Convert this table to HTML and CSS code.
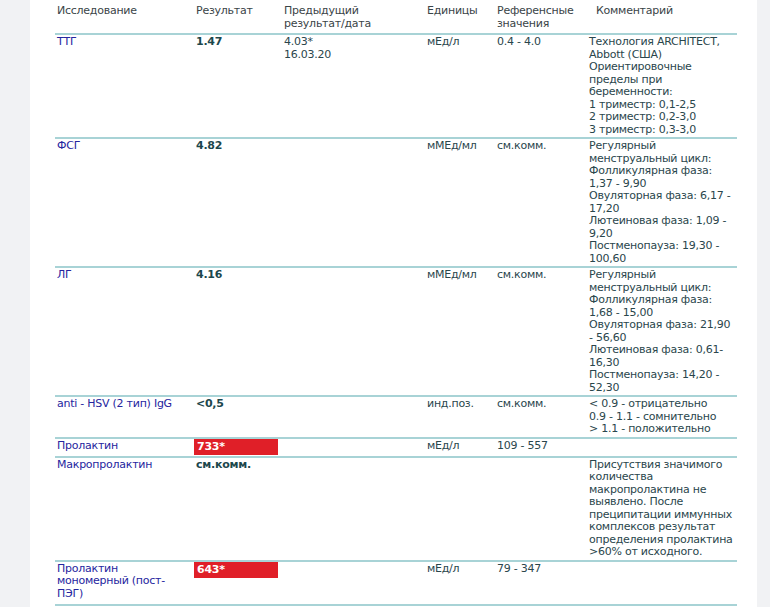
FILE: index.html
```html
<!DOCTYPE html>
<html lang="ru">
<head>
<meta charset="utf-8">
<title>Результаты анализов</title>
<link rel="stylesheet" href="styles.css">
</head>
<body>
<div class="page">
  <div class="sheet">
    <table class="results">
      <colgroup>
        <col class="c-name">
        <col class="c-res">
        <col class="c-prev">
        <col class="c-unit">
        <col class="c-ref">
        <col class="c-com">
      </colgroup>
      <thead>
        <tr>
          <th>Исследование</th>
          <th>Результат</th>
          <th>Предыдущий<br>результат/дата</th>
          <th>Единицы</th>
          <th>Референсные<br>значения</th>
          <th class="th-com">Комментарий</th>
        </tr>
      </thead>
      <tbody>
        <tr>
          <td class="name">ТТГ</td>
          <td class="res">1.47</td>
          <td>4.03*<br>16.03.20</td>
          <td>мЕд/л</td>
          <td>0.4 - 4.0</td>
          <td>Технология ARCHITECT,<br>Abbott (США)<br>Ориентировочные<br>пределы при<br>беременности:<br>1 триместр: 0,1-2,5<br>2 триместр: 0,2-3,0<br>3 триместр: 0,3-3,0</td>
        </tr>
        <tr>
          <td class="name">ФСГ</td>
          <td class="res">4.82</td>
          <td></td>
          <td>мМЕд/мл</td>
          <td>см.комм.</td>
          <td>Регулярный<br>менструальный цикл:<br>Фолликулярная фаза:<br>1,37 - 9,90<br>Овуляторная фаза: 6,17 -<br>17,20<br>Лютеиновая фаза: 1,09 -<br>9,20<br>Постменопауза: 19,30 -<br>100,60</td>
        </tr>
        <tr>
          <td class="name">ЛГ</td>
          <td class="res">4.16</td>
          <td></td>
          <td>мМЕд/мл</td>
          <td>см.комм.</td>
          <td>Регулярный<br>менструальный цикл:<br>Фолликулярная фаза:<br>1,68 - 15,00<br>Овуляторная фаза: 21,90<br>- 56,60<br>Лютеиновая фаза: 0,61-<br>16,30<br>Постменопауза: 14,20 -<br>52,30</td>
        </tr>
        <tr>
          <td class="name">anti - HSV (2 тип) IgG</td>
          <td class="res">&lt;0,5</td>
          <td></td>
          <td>инд.поз.</td>
          <td>см.комм.</td>
          <td>&lt; 0.9 - отрицательно<br>0.9 - 1.1 - сомнительно<br>&gt; 1.1 - положительно</td>
        </tr>
        <tr class="row-flag">
          <td class="name">Пролактин</td>
          <td class="res"><span class="flag">733*</span></td>
          <td></td>
          <td>мЕд/л</td>
          <td>109 - 557</td>
          <td></td>
        </tr>
        <tr>
          <td class="name">Макропролактин</td>
          <td class="res">см.комм.</td>
          <td></td>
          <td></td>
          <td></td>
          <td>Присутствия значимого<br>количества<br>макропролактина не<br>выявлено. После<br>преципитации иммунных<br>комплексов результат<br>определения пролактина<br>&gt;60% от исходного.</td>
        </tr>
        <tr class="row-flag row-last">
          <td class="name">Пролактин<br>мономерный (пост-<br>ПЭГ)</td>
          <td class="res"><span class="flag">643*</span></td>
          <td></td>
          <td>мЕд/л</td>
          <td>79 - 347</td>
          <td></td>
        </tr>
      </tbody>
    </table>
  </div>
</div>
</body>
</html>
```

FILE: styles.css
```css
html, body {
  margin: 0;
  padding: 0;
  background: #f1f2f4;
}

.page {
  display: flex;
  min-height: 607px;
  padding-left: 30px;
  padding-right: 13px;
}

.sheet {
  flex: 1;
  background: #ffffff;
  padding-left: 25px;
  padding-right: 20px;
  min-height: 607px;
}

.results {
  width: 682px;
  table-layout: fixed;
  border-collapse: separate;
  border-spacing: 0;
  font-family: "DejaVu Sans", Verdana, sans-serif;
  font-size: 11px;
  letter-spacing: -0.25px;
  line-height: 12.5px;
  color: #2a464c;
}

.c-name { width: 139px; }
.c-res { width: 88px; }
.c-prev { width: 143px; }
.c-unit { width: 70px; }
.c-ref { width: 92px; }
.c-com { width: 150px; }

.results th {
  font-weight: normal;
  text-align: left;
  vertical-align: top;
  color: #3a4447;
  padding: 5px 2px 3px 2px;
  white-space: nowrap;
}

.results th.th-com {
  padding-left: 9px;
}

.results td {
  vertical-align: top;
  text-align: left;
  padding: 1px 2px 1px 2px;
  border-top: 2px solid #a8d3d6;
  white-space: nowrap;
}

.results tr.row-last td {
  padding-bottom: 4px;
  border-bottom: 2px solid #a8d3d6;
}

.results td.name {
  color: #25259e;
}

.results td.res {
  font-weight: bold;
  color: #1c474c;
}

.results tr.row-flag td.res {
  padding: 0 4px 1px 0;
}

.flag {
  display: block;
  height: 16px;
  line-height: 16px;
  padding-left: 3px;
  background: #e01f28;
  color: #ffffff;
}
```
